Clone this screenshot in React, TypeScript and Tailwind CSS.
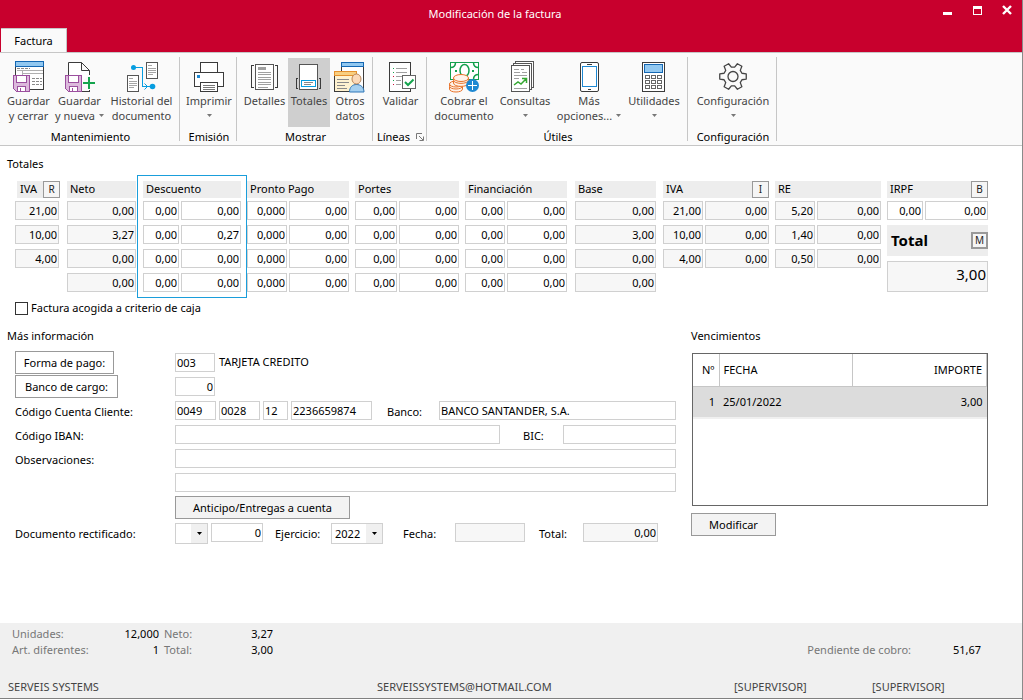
import clsx from "clsx"
import type { ReactNode } from "react"

const INK = "#3b3b3b"

function Icon({ children }: { children: ReactNode }) {
  return (
    <svg width="32" height="32" viewBox="0 0 32 32" fill="none" aria-hidden="true" className="shrink-0">
      {children}
    </svg>
  )
}

function Floppy({ x }: { x: number }) {
  return (
    <g transform={`translate(${x} 14)`} shapeRendering="crispEdges">
      <path d="M.5.5h16v16h-13l-3-3z" fill="#dcb9dc" stroke="#9b4f9e" />
      <rect x="3.5" y=".5" width="10" height="7" fill="#fff" stroke="#9b4f9e" />
      <rect x="4.5" y="11.5" width="8" height="5" fill="#fff" stroke="#9b4f9e" />
      <path d="M7 13v3" stroke="#9b4f9e" />
    </g>
  )
}

function SaveCloseIcon() {
  return (
    <Icon>
      <g shapeRendering="crispEdges">
        <rect x="2.5" y=".5" width="28" height="28" fill="#fff" stroke={INK} />
        <rect x="2.5" y=".5" width="28" height="5" fill="#92c8f0" stroke="#1467b3" />
        <path d="M4 9.5h26M9.5 10v4M10 12.5h20" stroke="#b0b0b0" />
        <path d="M4 7.5h13M19 17.5h10M19 20.5h10M19 23.5h10" stroke="#8a8a8a" strokeDasharray="3 1" />
      </g>
      <Floppy x={0} />
    </Icon>
  )
}

function SaveNewIcon() {
  return (
    <Icon>
      <path d="M4.5 31V1.5h13l8 8V14M25.5 29v2M17.5 1.5v8h8" fill="#fff" stroke={INK} />
      <path d="M16 30.5h10" stroke={INK} />
      <Floppy x={1} />
      <path d="M25 16v12M19 22h12" stroke="#14a44d" strokeWidth="2" />
    </Icon>
  )
}

function HistoryIcon() {
  return (
    <Icon>
      <g shapeRendering="crispEdges">
        <path d="M20.5 1.5h11v16h-11zM1.5 14.5h11v16h-11z" fill="#fff" stroke="#555" />
        <path
          d="M22 4.5h4M22 7.5h8M22 9.5h8M22 11.5h8M22 13.5h5M3 17.5h4M3 20.5h8M3 22.5h8M3 24.5h8M3 26.5h5"
          stroke="#a5a5a5"
        />
        <path d="M8 6.5h8.5v19H25" stroke="#069de0" />
      </g>
      <path d="M18.5 22.5l3 3-3 3" stroke="#069de0" />
      <circle cx="7.5" cy="6.5" r="2.5" fill="#069de0" />
      <circle cx="26.5" cy="25.5" r="2.8" fill="#069de0" />
    </Icon>
  )
}

function PrinterIcon() {
  return (
    <Icon>
      <g shapeRendering="crispEdges" stroke={INK}>
        <rect x="7.5" y="1.5" width="17" height="10" fill="#fff" />
        <rect x="1.5" y="11.5" width="29" height="14" fill="#fff" />
        <rect x="7.5" y="21.5" width="17" height="9" fill="#fff" />
        <path d="M10 24.5h12M10 26.5h12M10 28.5h12" stroke="#777" />
        <path d="M4 14h3v3H4z" fill="#1e88d2" stroke="none" />
      </g>
    </Icon>
  )
}

function DetailsIcon() {
  return (
    <Icon>
      <g shapeRendering="crispEdges">
        <path d="M5 4.5H2.5v22H5M26 4.5h2.5v22H26" stroke={INK} />
        <rect x="6.5" y="3.5" width="18" height="25" fill="#fff" stroke="#555" />
        <path d="M9 6h8v3H9z" fill="#a0a0a0" />
        <path d="M9 11.5h13M9 13.5h13M9 16.5h13M9 18.5h13M9 21.5h13M9 23.5h13M9 26.5h10" stroke="#a0a0a0" />
      </g>
    </Icon>
  )
}

function TotalsIcon() {
  return (
    <Icon>
      <g shapeRendering="crispEdges">
        <path d="M5 17.5H3.5v10H5M26 17.5h1.5v10H26" stroke={INK} />
        <rect x="6.5" y="3.5" width="18" height="25" fill="#fff" stroke="#555" />
        <rect x="8.5" y="19.5" width="14" height="6" fill="#fff" stroke="#069de0" />
        <path d="M11 21.5h9M11 23.5h7" stroke="#888" />
      </g>
    </Icon>
  )
}

function OtherDataIcon() {
  return (
    <Icon>
      <g shapeRendering="crispEdges">
        <rect x="7.5" y="1.5" width="22" height="28" fill="#fff" stroke={INK} />
        <rect x="7.5" y="1.5" width="22" height="4" fill="#92c8f0" stroke="#1467b3" />
        <rect x=".5" y="10.5" width="22" height="20" fill="#fff2d0" stroke={INK} />
        <rect x=".5" y="10.5" width="22" height="4" fill="#f8cf80" stroke="#e5912d" />
        <path d="M3 18.5h12M3 21.5h12M3 24.5h8M3 27.5h10" stroke="#8a8a8a" />
      </g>
      <path d="M15.5 31c0-5 3-7.5 7-7.5s7.5 2.5 7.5 7.5z" fill="#a5d0f0" stroke="#2e77b8" />
      <ellipse cx="22.5" cy="18" rx="4.5" ry="5" fill="#fbd9b8" stroke="#b8865a" />
    </Icon>
  )
}

function ValidateIcon() {
  return (
    <Icon>
      <g shapeRendering="crispEdges">
        <rect x="4.5" y="1.5" width="21" height="29" fill="#fff" stroke={INK} />
        <path d="M11 7.5h11M11 11.5h11M11 15.5h7M11 19.5h5M11 23.5h5" stroke="#a0a0a0" />
        <path d="M8 7.5h1M8 11.5h1M8 19.5h1" stroke="#14a44d" />
        <path d="M8 15.5h1M8 23.5h1" stroke="#d0103a" />
        <rect x="17.5" y="14.5" width="13" height="13" fill="#fff" stroke="#666" />
      </g>
      <path d="M20 21l3 3 5.5-5.5" stroke="#14a44d" strokeWidth="2" />
    </Icon>
  )
}

function CashIcon() {
  return (
    <Icon>
      <rect x="2.5" y="1.5" width="28" height="17" fill="#fff" stroke="#14a04d" />
      <path
        d="M2.5 6.5c3 0 5-2 5-5M30.5 6.5c-3 0-5-2-5-5M30.5 13.5c-3 0-5 2-5 5"
        stroke="#14a04d"
        strokeWidth="1.5"
      />
      <ellipse cx="16.5" cy="9.5" rx="4.5" ry="6" stroke="#14a04d" strokeWidth="1.5" />
      <path d="M7 9h2v2H7zM24 9h2v2h-2z" fill="#14a04d" />
      <g fill="#fff3ea" stroke="#e8732c">
        <path d="M1.5 26v2c0 4 13 4 13 0v-2z" />
        <path d="M1.5 23v2c0 4 13 4 13 0v-2z" />
        <ellipse cx="8" cy="23" rx="6.5" ry="3" />
        <path d="M5.5 20v2c0 4.500 15 4.500 15 0v-2z" />
        <path d="M5.5 17v2c0 4.500 15 4.500 15 0v-2z" />
        <ellipse cx="13" cy="17" rx="7.5" ry="3.5" />
      </g>
      <circle cx="24.5" cy="24.5" r="6.5" fill="#1e88d2" />
      <path d="M24.5 20v9M20 24.5h9" stroke="#fff" />
    </Icon>
  )
}

function QueriesIcon() {
  return (
    <Icon>
      <g shapeRendering="crispEdges">
        <path d="M6.5.5h18v26h-18z" fill="#fff" stroke="#555" />
        <path d="M4.5 2.5h18v26h-18z" fill="#fff" stroke="#555" />
        <path d="M2.5 4.5h18v26h-18z" fill="#fff" stroke="#555" />
        <path d="M5 8.5h5M12 8.5h3M5 11.5h6M13 11.5h5M5 14.5h13M5 17.5h5M5 27.5h13" stroke="#a0a0a0" />
      </g>
      <path d="M5 24l4-3 3 2 5-5M13 17.5h4.5V22" stroke="#35a832" strokeWidth="1.5" />
    </Icon>
  )
}

function PhoneIcon() {
  return (
    <Icon>
      <rect x="7.5" y="1.5" width="18" height="29" rx="1.5" fill="#fff" stroke={INK} />
      <rect x="9.5" y="5.5" width="14" height="20" fill="#fff" stroke="#1e88d2" />
      <path d="M14 3.5h5M15 28.5h3" stroke={INK} />
    </Icon>
  )
}

function CalculatorIcon() {
  return (
    <Icon>
      <g shapeRendering="crispEdges">
        <rect x="4.5" y="1.5" width="22" height="29" fill="#fff" stroke={INK} />
        <rect x="6.5" y="3.5" width="18" height="8" fill="#92c8f0" stroke="#1467b3" />
        {[14, 19, 24].map((y) =>
          [7, 13, 19].map((x) => (
            <rect key={`${x}-${y}`} x={x + 0.5} y={y + 0.5} width="4" height="3" stroke="#666" />
          )),
        )}
      </g>
    </Icon>
  )
}

const gearPoints = [0, 60, 120, 180, 240, 300]
  .flatMap((a) => [
    [a - 20, 9.5],
    [a - 11, 13.5],
    [a + 11, 13.5],
    [a + 20, 9.5],
  ])
  .map(([a, r]) => {
    const t = (a * Math.PI) / 180
    return `${(16 + r * Math.cos(t)).toFixed(2)},${(15.5 + r * Math.sin(t)).toFixed(2)}`
  })
  .join(" ")

function GearIcon() {
  return (
    <Icon>
      <polygon points={gearPoints} stroke="#444" strokeWidth="1.3" strokeLinejoin="round" />
      <circle cx="16" cy="15.5" r="5" stroke="#444" strokeWidth="1.3" />
    </Icon>
  )
}

function Caret({ className = "text-[#777]" }: { className?: string }) {
  return (
    <svg width="5" height="3" viewBox="0 0 5 3" aria-hidden="true" className={clsx("inline-block shrink-0", className)}>
      <path d="M0 0h5L2.5 3z" fill="currentColor" />
    </svg>
  )
}

type RibbonButtonProps = {
  icon: ReactNode
  line1: string
  line2?: string
  menu?: boolean
  active?: boolean
  className: string
}

function RibbonButton({ icon, line1, line2, menu, active, className }: RibbonButtonProps) {
  return (
    <button
      type="button"
      className={clsx(
        "flex h-[69px] flex-col items-center whitespace-nowrap pt-[3px] text-[#444]",
        active && "bg-[#cfcfcf]",
        className,
      )}
    >
      {icon}
      <span className="leading-[15px]">{line1}</span>
      <span className="flex h-[15px] items-center gap-1 leading-[15px]">
        {line2}
        {menu && <Caret />}
      </span>
    </button>
  )
}

function RibbonGroup({ title, launcher, className, children }: {
  title: string
  launcher?: boolean
  className: string
  children: ReactNode
}) {
  return (
    <section className={clsx("flex h-[84px] shrink-0 flex-col border-r border-[#c6c6c6] pt-px pl-0.5", className)}>
      <div className="flex justify-center">{children}</div>
      <h2 className="mt-0.5 flex items-center justify-center gap-1.5 leading-4">
        {title}
        {launcher && (
          <svg width="8" height="8" viewBox="0 0 8 8" fill="none" stroke="#777" aria-hidden="true">
            <path d="M.5 6V.5H6M3 3l4 4M7.5 3.5v4h-4" />
          </svg>
        )}
      </h2>
    </section>
  )
}

const inputBase = "h-[19px] min-w-0 border border-[#d0d0d0] px-px leading-4 outline-none"

function Field({ value = "", label, readOnly, right, className }: {
  value?: string
  label: string
  readOnly?: boolean
  right?: boolean
  className?: string
}) {
  return (
    <input
      type="text"
      aria-label={label}
      defaultValue={value}
      readOnly={readOnly}
      className={clsx(inputBase, readOnly ? "bg-[#f7f7f7]" : "bg-white", right && "text-right", className)}
    />
  )
}

function KeyButton({ children, thick }: { children: string; thick?: boolean }) {
  return (
    <button
      type="button"
      className={clsx(
        "flex size-[17px] items-center justify-center border-[#999] bg-[#f5f5f5] pb-px text-[10px] leading-3 text-[#222]",
        thick ? "border-2" : "border",
      )}
    >
      {children}
    </button>
  )
}

function ColumnHead({ title, keyName, className }: { title: string; keyName?: string; className?: string }) {
  return (
    <div className={clsx("mb-[3px] flex h-[17px] items-center justify-between bg-[#ededed] pl-[3px]", className)}>
      <span>{title}</span>
      {keyName && <KeyButton>{keyName}</KeyButton>}
    </div>
  )
}

type Column = {
  title: string
  keyName?: string
  className: string
  headClassName?: string
  cells: string
  readOnly?: boolean
  rows: string[][]
}

const columns: Column[] = [
  {
    title: "IVA",
    keyName: "R",
    className: "pt-1.5 pr-2",
    headClassName: "-mr-px ml-0.5",
    cells: "grid-cols-1",
    readOnly: true,
    rows: [["21,00"], ["10,00"], ["4,00"]],
  },
  { title: "Neto", className: "pt-1.5 pr-px", cells: "grid-cols-1", readOnly: true, rows: [["0,00"], ["3,27"], ["0,00"], ["0,00"]] },
  {
    title: "Descuento",
    className: "border border-[#1a9edb] p-[5px]",
    cells: "grid-cols-[36fr_60fr]",
    rows: [["0,00", "0,00"], ["0,00", "0,27"], ["0,00", "0,00"], ["0,00", "0,00"]],
  },
  {
    title: "Pronto Pago",
    className: "pt-1.5 pr-1.5",
    cells: "grid-cols-[40fr_60fr]",
    rows: [["0,000", "0,00"], ["0,000", "0,00"], ["0,000", "0,00"], ["0,000", "0,00"]],
  },
  {
    title: "Portes",
    className: "pt-1.5 pr-1.5",
    cells: "grid-cols-[42fr_60fr]",
    rows: [["0,00", "0,00"], ["0,00", "0,00"], ["0,00", "0,00"], ["0,00", "0,00"]],
  },
  {
    title: "Financiación",
    className: "pt-1.5 pr-2",
    cells: "grid-cols-[40fr_60fr]",
    rows: [["0,00", "0,00"], ["0,00", "0,00"], ["0,00", "0,00"], ["0,00", "0,00"]],
  },
  { title: "Base", className: "pt-1.5 pr-[7px]", cells: "grid-cols-1", readOnly: true, rows: [["0,00"], ["3,00"], ["0,00"], ["0,00"]] },
  {
    title: "IVA",
    keyName: "I",
    className: "pt-1.5 pr-1.5",
    cells: "grid-cols-[40fr_64fr]",
    readOnly: true,
    rows: [["21,00", "0,00"], ["10,00", "0,00"], ["4,00", "0,00"]],
  },
  {
    title: "RE",
    className: "pt-1.5 pr-1.5",
    cells: "grid-cols-[40fr_64fr]",
    readOnly: true,
    rows: [["5,20", "0,00"], ["1,40", "0,00"], ["0,50", "0,00"]],
  },
]

function TotalsColumn({ title, keyName, className, headClassName, cells, readOnly, rows }: Column) {
  return (
    <div className={clsx("min-w-0", className)}>
      <ColumnHead title={title} keyName={keyName} className={headClassName} />
      <div className={clsx("grid gap-x-0.5 gap-y-[5px]", cells)}>
        {rows.flatMap((row, r) =>
          row.map((value, c) => (
            <Field key={`${r}-${c}`} label={`${title} ${r + 1}`} value={value} readOnly={readOnly} right />
          )),
        )}
      </div>
    </div>
  )
}

function Totals() {
  return (
    <section className="pt-2">
      <h2 className="pl-[7px] leading-5">Totales</h2>
      <div className="mt-px grid grid-cols-[52fr_70fr_110fr_108fr_110fr_110fr_88fr_112fr_112fr_101fr] items-start pr-[34px] pl-[15px]">
        {columns.map((column, i) => (
          <TotalsColumn key={i} {...column} />
        ))}
        <div className="min-w-0 pt-1.5">
          <ColumnHead title="IRPF" keyName="B" />
          <div className="grid grid-cols-[36fr_63fr] gap-x-0.5">
            <Field label="IRPF %" value="0,00" right />
            <Field label="IRPF" value="0,00" right />
          </div>
          <div className="mt-[5px] flex h-[31px] items-center justify-between bg-[#ededed] pl-1">
            <label htmlFor="total" className="text-[15px] font-bold">Total</label>
            <KeyButton thick>M</KeyButton>
          </div>
          <input
            id="total"
            readOnly
            defaultValue="3,00"
            className="mt-[5px] block h-[31px] w-full min-w-0 border border-[#d0d0d0] bg-[#f7f7f7] px-px pb-1.5 text-right text-[15px] outline-none"
          />
        </div>
      </div>
      <label className="flex items-center gap-[3px] pl-[15px] leading-5">
        <input type="checkbox" className="size-[13px] appearance-none border border-[#333] bg-white checked:bg-[#333]" />
        Factura acogida a criterio de caja
      </label>
    </section>
  )
}

function DropDown({ label, value, className }: { label: string; value: string; className: string }) {
  return (
    <div className={clsx("relative mt-0.5 h-[21px] shrink-0", className)}>
      <select
        aria-label={label}
        defaultValue={value}
        className="h-full w-full appearance-none border border-[#d0d0d0] bg-white pl-[3px] leading-4 outline-none"
      >
        <option>{value}</option>
      </select>
      <span className="pointer-events-none absolute inset-y-px right-px flex w-4 items-center justify-center bg-[#f0f0f0]">
        <Caret className="text-black" />
      </span>
    </div>
  )
}

function PlainButton({ children, className }: { children: string; className: string }) {
  return (
    <button type="button" className={clsx("h-[23px] shrink-0 border border-[#999] pt-0.5 whitespace-nowrap", className)}>
      {children}
    </button>
  )
}

function Row({ label, children }: { label: ReactNode; children: ReactNode }) {
  return (
    <div className="flex h-6 items-start">
      <div className="w-40 shrink-0">{label}</div>
      {children}
    </div>
  )
}

const caption = "mt-0.5 shrink-0 leading-[22px]"

function Information() {
  return (
    <section className="min-w-0 flex-1">
      <h2 className="pl-[7px] leading-5">Más información</h2>
      <div className="pt-[5px] pl-[15px]">
        <Row label={<PlainButton className="w-[99px] bg-white">Forma de pago:</PlainButton>}>
          <Field label="Forma de pago" value="003" className="mt-0.5 w-10" />
          <span className="ml-1 leading-[22px]">TARJETA CREDITO</span>
        </Row>
        <Row label={<PlainButton className="w-[103px] bg-white">Banco de cargo:</PlainButton>}>
          <Field label="Banco de cargo" value="0" right className="mt-0.5 w-10" />
        </Row>
        <Row label={<p className={caption}>Código Cuenta Cliente:</p>}>
          <Field label="Entidad" value="0049" className="mt-0.5 w-[41px] shrink-0" />
          <Field label="Oficina" value="0028" className="mt-0.5 ml-[3px] w-[41px] shrink-0" />
          <Field label="DC" value="12" className="mt-0.5 ml-[3px] w-[25px] shrink-0" />
          <Field label="Cuenta" value="2236659874" className="mt-0.5 ml-[3px] w-[81px] shrink-0" />
          <label htmlFor="banco" className={clsx(caption, "w-[67px] pl-[15px]")}>Banco:</label>
          <input id="banco" defaultValue="BANCO SANTANDER, S.A." className={clsx(inputBase, "mt-0.5 flex-1")} />
        </Row>
        <Row label={<label htmlFor="iban" className={clsx(caption, "block")}>Código IBAN:</label>}>
          <input id="iban" className={clsx(inputBase, "mt-0.5 flex-1")} />
          <label htmlFor="bic" className={clsx(caption, "w-[63px] pl-[23px]")}>BIC:</label>
          <input id="bic" className={clsx(inputBase, "mt-0.5 w-[113px] shrink-0")} />
        </Row>
        <Row label={<label htmlFor="observaciones" className={clsx(caption, "block")}>Observaciones:</label>}>
          <input id="observaciones" className={clsx(inputBase, "mt-0.5 flex-1")} />
        </Row>
        <Row label={null}>
          <Field label="Observaciones, línea 2" className="mt-0.5 flex-1" />
        </Row>
        <div className="mt-px mb-0.5 pl-40">
          <PlainButton className="block w-[175px] bg-[#f3f3f3]">Anticipo/Entregas a cuenta</PlainButton>
        </div>
        <Row label={<p className={caption}>Documento rectificado:</p>}>
          <DropDown label="Serie" value="" className="w-[33px]" />
          <Field label="Documento rectificado" value="0" right className="mt-0.5 ml-[3px] w-[52px] shrink-0" />
          <span className={clsx(caption, "w-[68px] pl-3")}>Ejercicio:</span>
          <DropDown label="Ejercicio" value="2022" className="w-[52px]" />
          <label htmlFor="fecha" className={clsx(caption, "w-[72px] pl-5")}>Fecha:</label>
          <input id="fecha" readOnly className={clsx(inputBase, "mt-0.5 w-[70px] shrink-0 bg-[#f7f7f7]")} />
          <label htmlFor="rectificado-total" className={clsx(caption, "w-[58px] pl-3.5")}>Total:</label>
          <input
            id="rectificado-total"
            readOnly
            defaultValue="0,00"
            className={clsx(inputBase, "mt-0.5 w-[75px] shrink-0 bg-[#f7f7f7] text-right")}
          />
        </Row>
      </div>
    </section>
  )
}

function DueDates() {
  return (
    <section className="w-[297px] shrink-0">
      <h2 className="leading-5">Vencimientos</h2>
      <div className="mt-[7px] ml-px h-[153px] border border-[#666] bg-white">
        <table className="w-full table-fixed border-collapse">
          <thead>
            <tr className="h-8 border-b border-[#c6c6c6]">
              <th className="w-[26px] border-r border-[#c6c6c6] pr-1 text-right font-normal">Nº</th>
              <th className="w-[133px] border-r border-[#c6c6c6] pl-1 text-left font-normal">FECHA</th>
              <th className="border-r border-[#c6c6c6] pr-1 text-right font-normal">IMPORTE</th>
            </tr>
          </thead>
          <tbody>
            <tr className="h-8 border-b-2 border-[#f0f0f0] bg-[#dcdcdc]">
              <td className="pr-1 text-right">1</td>
              <td className="pl-1">25/01/2022</td>
              <td className="pr-1 text-right">3,00</td>
            </tr>
          </tbody>
        </table>
      </div>
      <PlainButton className="mt-[7px] w-[85px] bg-[#f3f3f3]">Modificar</PlainButton>
    </section>
  )
}

function Header() {
  return (
    <header className="bg-[#c8002d]">
      <div className="grid h-7 grid-cols-[1fr_auto_1fr] items-center text-white">
        <h1 className="col-start-2 pr-8">Modificación de la factura</h1>
        <div className="mb-2 flex justify-end gap-5 pr-2.5">
          <button type="button" aria-label="Minimizar">
            <svg width="10" height="10" viewBox="0 0 10 10" aria-hidden="true">
              <path d="M1 7h9v3H1z" fill="currentColor" />
            </svg>
          </button>
          <button type="button" aria-label="Maximizar">
            <svg width="10" height="10" viewBox="0 0 10 10" aria-hidden="true">
              <path d="M1 1h9v9H1zm1 3v5h7V4z" fill="currentColor" fillRule="evenodd" />
            </svg>
          </button>
          <button type="button" aria-label="Cerrar">
            <svg width="10" height="10" viewBox="0 0 10 10" aria-hidden="true">
              <path d="M1 1l8 8M9 1L1 9" stroke="currentColor" strokeWidth="2.4" />
            </svg>
          </button>
        </div>
      </div>
      <div className="flex pl-px">
        <button type="button" className="h-6 w-[66px] border-t border-r border-[#c6c6c6] bg-[#fafafa] pt-px text-black">
          Factura
        </button>
      </div>
    </header>
  )
}

function Ribbon() {
  return (
    <div className="flex h-[94px] overflow-hidden border-t border-b border-[#c6c6c6] bg-[#fafafa] pt-1">
      <RibbonGroup title="Mantenimiento" className="w-[180px]">
        <RibbonButton icon={<SaveCloseIcon />} line1="Guardar" line2="y cerrar" className="w-[50px]" />
        <RibbonButton icon={<SaveNewIcon />} line1="Guardar" line2="y nueva" menu className="w-[52px]" />
        <RibbonButton icon={<HistoryIcon />} line1="Historial del" line2="documento" className="w-[72px]" />
      </RibbonGroup>
      <RibbonGroup title="Emisión" className="w-[57px]">
        <RibbonButton icon={<PrinterIcon />} line1="Imprimir" menu className="w-12" />
      </RibbonGroup>
      <RibbonGroup title="Mostrar" className="w-[136px]">
        <RibbonButton icon={<DetailsIcon />} line1="Detalles" className="w-[47px]" />
        <RibbonButton icon={<TotalsIcon />} line1="Totales" active className="w-[42px]" />
        <RibbonButton icon={<OtherDataIcon />} line1="Otros" line2="datos" className="w-10" />
      </RibbonGroup>
      <RibbonGroup title="Líneas" launcher className="w-[54px]">
        <RibbonButton icon={<ValidateIcon />} line1="Validar" className="w-[50px]" />
      </RibbonGroup>
      <RibbonGroup title="Útiles" className="w-[261px]">
        <RibbonButton icon={<CashIcon />} line1="Cobrar el" line2="documento" className="w-16" />
        <RibbonButton icon={<QueriesIcon />} line1="Consultas" menu className="w-[58px]" />
        <RibbonButton icon={<PhoneIcon />} line1="Más" line2="opciones..." menu className="w-[70px]" />
        <RibbonButton icon={<CalculatorIcon />} line1="Utilidades" menu className="w-[60px]" />
      </RibbonGroup>
      <RibbonGroup title="Configuración" className="w-[89px]">
        <RibbonButton icon={<GearIcon />} line1="Configuración" menu className="w-20" />
      </RibbonGroup>
    </div>
  )
}

function Footer() {
  return (
    <footer className="border-b border-[#808080] bg-[#f0f0f0] pt-[3px] pb-px">
      <div className="flex items-end justify-between pr-[41px] pl-3 leading-4">
        <dl className="grid grid-cols-[90px_57px_60px_54px] text-[#777]">
          <dt className="whitespace-nowrap">Unidades:</dt>
          <dd className="text-right text-black">12,000</dd>
          <dt className="pl-[5px]">Neto:</dt>
          <dd className="text-right text-black">3,27</dd>
          <dt className="whitespace-nowrap">Art. diferentes:</dt>
          <dd className="text-right text-black">1</dd>
          <dt className="pl-[5px]">Total:</dt>
          <dd className="text-right text-black">3,00</dd>
        </dl>
        <dl className="flex text-[#777]">
          <dt>Pendiente de cobro:</dt>
          <dd className="w-[70px] text-right text-black">51,67</dd>
        </dl>
      </div>
      <div className="mt-[19px] grid h-5 grid-cols-[369fr_357fr_138fr_150fr] items-center pl-2 text-[#444]">
        <span>SERVEIS SYSTEMS</span>
        <span>SERVEISSYSTEMS@HOTMAIL.COM</span>
        <span>[SUPERVISOR]</span>
        <span>[SUPERVISOR]</span>
      </div>
    </footer>
  )
}

export default function App() {
  return (
    <div className="flex min-h-screen flex-col border-r border-[#8a8a8a] bg-white pb-px font-['Noto_Sans',sans-serif] text-[11px] text-black">
      <Header />
      <Ribbon />
      <main className="flex-1">
        <Totals />
        <div className="mt-2 flex gap-[15px] pr-[34px]">
          <Information />
          <DueDates />
        </div>
      </main>
      <Footer />
    </div>
  )
}
